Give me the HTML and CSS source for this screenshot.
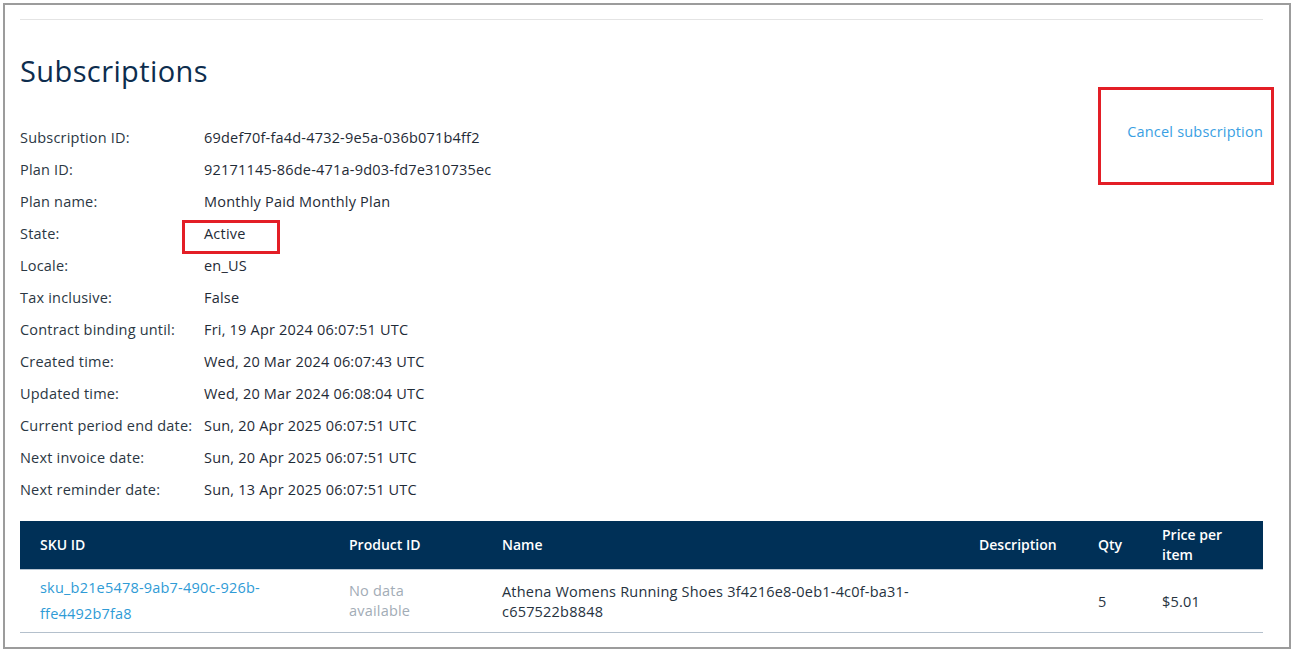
FILE: index.html
```html
<!DOCTYPE html>
<html lang="en">
<head>
<meta charset="utf-8">
<title>Subscriptions</title>
<link rel="stylesheet" href="styles.css">
</head>
<body>
<div class="frame">
  <div class="rule"></div>
  <h1 class="title">Subscriptions</h1>
  <div class="summary">
    <dl class="details">
      <dt>Subscription ID:</dt><dd>69def70f-fa4d-4732-9e5a-036b071b4ff2</dd>
      <dt>Plan ID:</dt><dd>92171145-86de-471a-9d03-fd7e310735ec</dd>
      <dt>Plan name:</dt><dd>Monthly Paid Monthly Plan</dd>
      <dt>State:</dt><dd>Active</dd>
      <dt>Locale:</dt><dd>en_US</dd>
      <dt>Tax inclusive:</dt><dd>False</dd>
      <dt>Contract binding until:</dt><dd>Fri, 19 Apr 2024 06:07:51 UTC</dd>
      <dt>Created time:</dt><dd>Wed, 20 Mar 2024 06:07:43 UTC</dd>
      <dt>Updated time:</dt><dd>Wed, 20 Mar 2024 06:08:04 UTC</dd>
      <dt>Current period end date:</dt><dd>Sun, 20 Apr 2025 06:07:51 UTC</dd>
      <dt>Next invoice date:</dt><dd>Sun, 20 Apr 2025 06:07:51 UTC</dd>
      <dt>Next reminder date:</dt><dd>Sun, 13 Apr 2025 06:07:51 UTC</dd>
    </dl>
    <a class="cancel" href="#">Cancel subscription</a>
  </div>
  <table class="items">
    <colgroup>
      <col class="c-sku">
      <col class="c-prod">
      <col class="c-name">
      <col class="c-desc">
      <col class="c-qty">
      <col class="c-price">
    </colgroup>
    <thead>
      <tr>
        <th>SKU ID</th>
        <th>Product ID</th>
        <th>Name</th>
        <th>Description</th>
        <th>Qty</th>
        <th>Price per item</th>
      </tr>
    </thead>
    <tbody>
      <tr>
        <td class="cell-sku"><a class="sku" href="#">sku_b21e5478-9ab7-490c-926b-ffe4492b7fa8</a></td>
        <td><span class="nodata">No data available</span></td>
        <td class="cell-shift">Athena Womens Running Shoes 3f4216e8-0eb1-4c0f-ba31-c657522b8848</td>
        <td></td>
        <td class="cell-shift">5</td>
        <td class="cell-shift">$5.01</td>
      </tr>
    </tbody>
  </table>
  <div class="mark mark-cancel"></div>
  <div class="mark mark-state"></div>
</div>
</body>
</html>
```
FILE: styles.css
```css
html, body {
  margin: 0;
  padding: 0;
  background: #ffffff;
}
body {
  font-family: "Open Sans", "Noto Sans", sans-serif;
  font-size: 14.5px;
  letter-spacing: 0.2px;
  color: #26323e;
}
.frame {
  position: relative;
  box-sizing: border-box;
  width: 1288px;
  height: 646px;
  margin: 3px 0 0 3px;
  border: 2px solid #9c9c9c;
  padding: 14px 26px 0 15px;
}
.rule {
  border-top: 1px solid #e4e4e4;
}
.title {
  margin: 30px 0 0 0;
  font-size: 29px;
  line-height: 42px;
  font-weight: 400;
  letter-spacing: 0.4px;
  color: #0d2d4e;
}
.summary {
  display: flex;
  justify-content: space-between;
  align-items: flex-start;
  margin-top: 30px;
}
.details {
  display: grid;
  grid-template-columns: 184px auto;
  grid-auto-rows: 32px;
  align-items: center;
  margin: 0;
}
.details dt, .details dd {
  margin: 0;
  line-height: 20px;
}
.details dt {
  color: #2b3743;
}
.details dd {
  color: #1f2b37;
}
.cancel {
  line-height: 20px;
  color: #3a9fe3;
  text-decoration: none;
}
.items {
  width: 1243px;
  margin-top: 15px;
  border-collapse: collapse;
  table-layout: fixed;
}
.c-sku { width: 309px; }
.c-prod { width: 153px; }
.c-name { width: 477px; }
.c-desc { width: 119px; }
.c-qty { width: 64px; }
.c-price { width: 121px; }
.items th {
  height: 48px;
  box-sizing: border-box;
  background: #003057;
  color: #ffffff;
  font-weight: 600;
  font-size: 14px;
  letter-spacing: 0;
  text-align: left;
  line-height: 20px;
  padding: 0 20px;
  border-bottom: 1px solid #b7c4d1;
}
.items td {
  height: 62px;
  box-sizing: border-box;
  padding: 5px 20px;
  line-height: 20px;
  vertical-align: middle;
  border-bottom: 1px solid #b4c0cc;
  color: #26323e;
}
.items td.cell-sku {
  line-height: 26px;
  padding-right: 30px;
}
.items td.cell-shift {
  padding-top: 8px;
}
.sku {
  color: #2f9bd6;
  text-decoration: none;
}
.nodata {
  display: block;
  max-width: 75px;
  color: #a2acb6;
}
.mark {
  position: absolute;
  box-sizing: border-box;
  border: 3px solid #e31e26;
}
.mark-cancel {
  left: 1093px;
  top: 82px;
  width: 176px;
  height: 98px;
}
.mark-state {
  left: 177px;
  top: 215px;
  width: 98px;
  height: 34px;
}
```
